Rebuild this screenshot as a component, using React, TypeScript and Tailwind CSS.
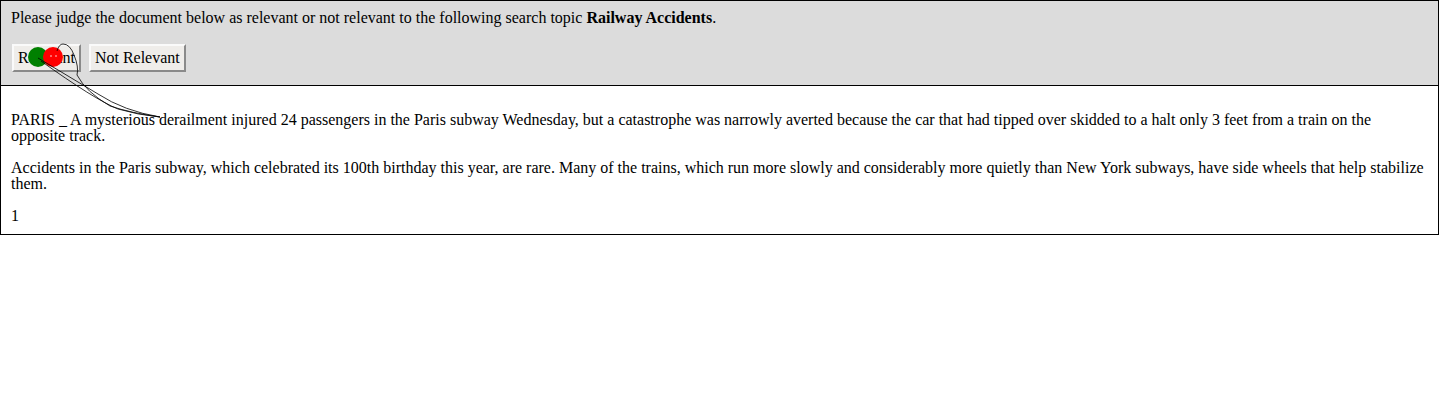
import React from "react";

const paragraphs = [
  "PARIS _ A mysterious derailment injured 24 passengers in the Paris subway Wednesday, but a catastrophe was narrowly averted because the car that had tipped over skidded to a halt only 3 feet from a train on the opposite track.",
  "Accidents in the Paris subway, which celebrated its 100th birthday this year, are rare. Many of the trains, which run more slowly and considerably more quietly than New York subways, have side wheels that help stabilize them.",
  "1",
];

const buttonClass =
  "bg-[#efedea] text-black text-base leading-4 px-[4px] h-[28px] border-2 border-t-[#fafafa] border-l-[#fafafa] border-b-[#8a8a8a] border-r-[#8a8a8a]";

const App = () => {
  return (
    <div
      className="relative min-h-[400px] bg-white text-black"
      style={{ fontFamily: '"Liberation Serif", "Times New Roman", serif' }}
    >
      <div className="w-[1439px] border border-black">
        <div className="bg-[#dcdcdc] border-b border-black pt-[9px] pb-[13px] px-[10px]">
          <p className="text-base leading-4">
            Please judge the document below as relevant or not relevant to the following search topic{" "}
            <strong>Railway Accidents</strong>.
          </p>
          <div className="flex gap-2 mt-[18px] ml-px">
            <button className={buttonClass}>Relevant</button>
            <button className={buttonClass}>Not Relevant</button>
          </div>
        </div>
        <div className="px-[10px] pt-[10px] pb-[10px]">
          {paragraphs.map((text, i) => (
            <p key={i} className="text-base leading-4 my-4 last:mb-0">
              {text}
            </p>
          ))}
        </div>
      </div>

      {/* mouse trail overlay */}
      <svg
        className="absolute left-0 top-0 pointer-events-none"
        width="200"
        height="130"
        viewBox="0 0 200 130"
      >
        <circle cx="38" cy="57" r="10" fill="#008000" />
        <circle cx="53" cy="57" r="10" fill="#ff0000" />
        <path d="M50 56 h2 M55 56 h2" stroke="#ffffff" strokeWidth="0.8" />
        <g fill="none" stroke="#000" strokeWidth="0.8">
          <path d="M38 58 L98 94 Q124 111 160 117" />
          <path d="M41 61 Q94 99 118 109 Q138 115 160 117" />
          <path d="M57 51 Q59 44 63 44 Q70 44 74 55 Q79 67 77 75 Q86 92 110 106 Q131 113 160 117" />
        </g>
      </svg>
    </div>
  );
};

export default App;
